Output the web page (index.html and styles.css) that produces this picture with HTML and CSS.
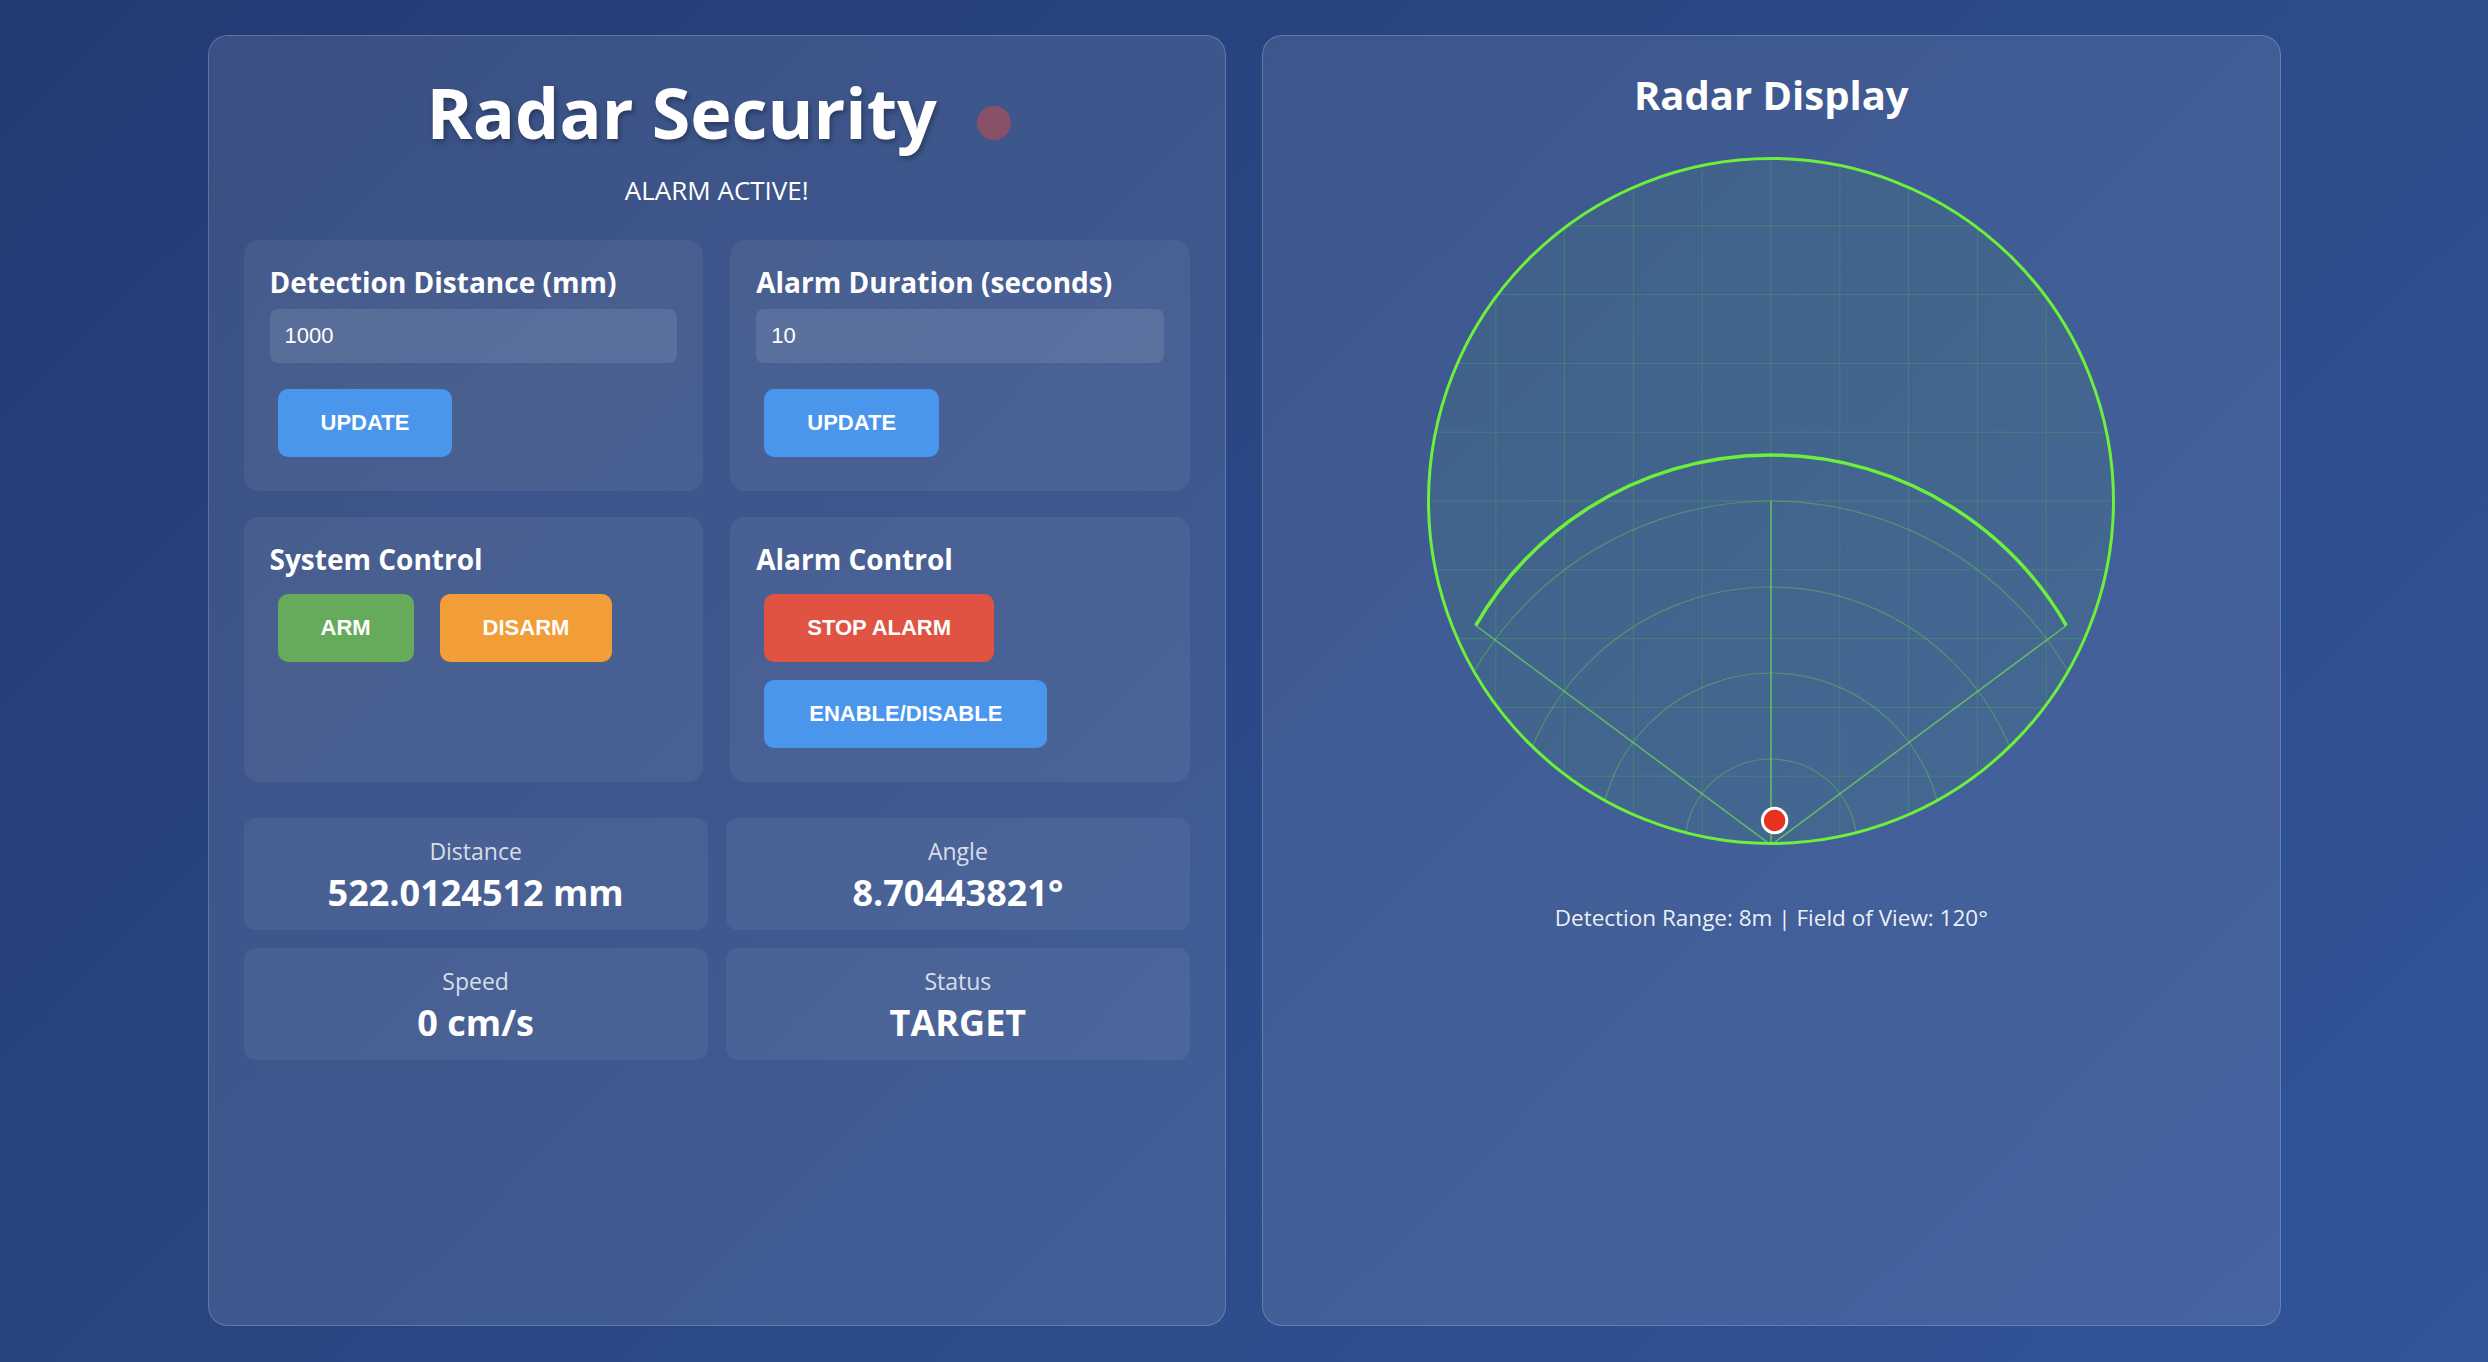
FILE: index.html
```html
<!DOCTYPE html>
<html lang="en">
<head>
<meta charset="utf-8">
<title>Radar Security</title>
<link rel="stylesheet" href="styles.css">
</head>
<body>
<div class="layout">
  <section class="panel control-panel">
    <h1 class="title"><span class="title-text">Radar Security</span><span class="alarm-dot"></span></h1>
    <div class="status-line">ALARM ACTIVE!</div>

    <div class="controls">
      <div class="card">
        <h3 class="card-title">Detection Distance (mm)</h3>
        <input class="field" type="text" value="1000">
        <div class="btn-row"><button class="btn btn-blue">UPDATE</button></div>
      </div>
      <div class="card">
        <h3 class="card-title">Alarm Duration (seconds)</h3>
        <input class="field" type="text" value="10">
        <div class="btn-row"><button class="btn btn-blue">UPDATE</button></div>
      </div>
      <div class="card">
        <h3 class="card-title">System Control</h3>
        <div class="btn-row">
          <button class="btn btn-green">ARM</button>
          <button class="btn btn-orange">DISARM</button>
        </div>
      </div>
      <div class="card">
        <h3 class="card-title">Alarm Control</h3>
        <div class="btn-row">
          <button class="btn btn-red">STOP ALARM</button>
          <button class="btn btn-blue btn-wide">ENABLE/DISABLE</button>
        </div>
      </div>
    </div>

    <div class="stats">
      <div class="stat">
        <div class="stat-label">Distance</div>
        <div class="stat-value">522.0124512 mm</div>
      </div>
      <div class="stat">
        <div class="stat-label">Angle</div>
        <div class="stat-value">8.70443821°</div>
      </div>
      <div class="stat">
        <div class="stat-label">Speed</div>
        <div class="stat-value">0 cm/s</div>
      </div>
      <div class="stat">
        <div class="stat-label">Status</div>
        <div class="stat-value">TARGET</div>
      </div>
    </div>
  </section>

  <section class="panel radar-panel">
    <h2 class="radar-title">Radar Display</h2>
    <svg class="radar" width="688" height="688" viewBox="0 0 688 688">
      <defs>
        <clipPath id="scope">
          <circle cx="344" cy="344" r="342.5"/>
        </clipPath>
      </defs>
      <circle cx="344" cy="344" r="342.5" fill="rgba(76,175,80,0.1)"/>
      <g clip-path="url(#scope)">
        <g stroke="rgba(90,185,90,0.3)" stroke-width="1">
          <line x1="68.8" y1="0" x2="68.8" y2="688"/>
          <line x1="137.6" y1="0" x2="137.6" y2="688"/>
          <line x1="206.4" y1="0" x2="206.4" y2="688"/>
          <line x1="275.2" y1="0" x2="275.2" y2="688"/>
          <line x1="344" y1="0" x2="344" y2="688"/>
          <line x1="412.8" y1="0" x2="412.8" y2="688"/>
          <line x1="481.6" y1="0" x2="481.6" y2="688"/>
          <line x1="550.4" y1="0" x2="550.4" y2="688"/>
          <line x1="619.2" y1="0" x2="619.2" y2="688"/>
          <line x1="0" y1="68.8" x2="688" y2="68.8"/>
          <line x1="0" y1="137.6" x2="688" y2="137.6"/>
          <line x1="0" y1="206.4" x2="688" y2="206.4"/>
          <line x1="0" y1="275.2" x2="688" y2="275.2"/>
          <line x1="0" y1="344" x2="688" y2="344"/>
          <line x1="0" y1="412.8" x2="688" y2="412.8"/>
          <line x1="0" y1="481.6" x2="688" y2="481.6"/>
          <line x1="0" y1="550.4" x2="688" y2="550.4"/>
          <line x1="0" y1="619.2" x2="688" y2="619.2"/>
        </g>
        <g fill="none" stroke="rgba(100,200,90,0.45)" stroke-width="1.2">
          <circle cx="344" cy="688" r="86"/>
          <circle cx="344" cy="688" r="172"/>
          <circle cx="344" cy="688" r="258"/>
          <circle cx="344" cy="688" r="344"/>
        </g>
        <g stroke="rgba(110,215,90,0.75)" stroke-width="1.5">
          <line x1="344" y1="688" x2="48.7" y2="468.5"/>
          <line x1="344" y1="688" x2="639.3" y2="468.5"/>
          <line x1="344" y1="688" x2="344" y2="344"/>
        </g>
        <path d="M 48.7 468.5 A 341 341 0 0 1 639.3 468.5" fill="none" stroke="#6cf03c" stroke-width="3.5"/>
      </g>
      <circle cx="344" cy="344" r="342.5" fill="none" stroke="#6cf03c" stroke-width="3"/>
      <circle cx="347.6" cy="663.5" r="12.2" fill="#e8321e" stroke="#ffffff" stroke-width="3"/>
    </svg>
    <div class="radar-caption">Detection Range: 8m | Field of View: 120°</div>
  </section>
</div>
</body>
</html>
```
FILE: styles.css
```css
* {
  box-sizing: border-box;
}

html, body {
  margin: 0;
  padding: 0;
}

body {
  min-height: 100vh;
  background: linear-gradient(135deg, #233b73 0%, #2b4a88 55%, #31549a 100%);
  font-family: "Open Sans", "DejaVu Sans", sans-serif;
  color: #ffffff;
  overflow: hidden;
}

.layout {
  width: 2073px;
  height: 1291px;
  margin: 35px auto 0;
  display: grid;
  grid-template-columns: 1fr 1fr;
  column-gap: 36px;
}

.panel {
  background: rgba(255, 255, 255, 0.1);
  border: 1px solid rgba(255, 255, 255, 0.2);
  border-radius: 20px;
  padding: 35px;
}

/* ---------- left panel ---------- */

.title {
  margin: 0;
  display: flex;
  justify-content: center;
  align-items: center;
  gap: 40px;
  padding-left: 4px;
  font-size: 70px;
  line-height: 82px;
  font-weight: 700;
  text-shadow: 2px 3px 5px rgba(0, 0, 0, 0.3);
}

.alarm-dot {
  width: 34px;
  height: 34px;
  border-radius: 50%;
  background: rgba(231, 76, 60, 0.45);
  margin-top: 21px;
}

.status-line {
  margin-top: 24px;
  text-align: center;
  font-size: 26px;
  line-height: 26px;
}

.controls {
  margin-top: 37px;
  display: grid;
  grid-template-columns: 1fr 1fr;
  column-gap: 27px;
  row-gap: 26px;
}

.card {
  background: rgba(255, 255, 255, 0.06);
  border-radius: 15px;
  padding: 26px;
}

.card-title {
  margin: 0 0 11px;
  font-size: 28px;
  line-height: 32px;
  font-weight: 700;
}

.field {
  display: block;
  width: 100%;
  height: 54px;
  margin: 0 0 18px;
  padding: 0 15px;
  border: none;
  border-radius: 8px;
  background: rgba(255, 255, 255, 0.1);
  color: #ffffff;
  font-family: "Liberation Sans", Arial, sans-serif;
  font-size: 22px;
  outline: none;
}

.btn-row {
  display: flex;
  flex-wrap: wrap;
  column-gap: 10px;
  row-gap: 2px;
}

.btn {
  margin: 8px;
  padding: 21px 43px;
  border: none;
  border-radius: 10px;
  color: #ffffff;
  font-family: "Liberation Sans", Arial, sans-serif;
  font-size: 22px;
  line-height: 26px;
  font-weight: 700;
  cursor: pointer;
}

.btn-wide {
  padding-left: 45px;
  padding-right: 45px;
}

.btn-blue {
  background: #4a96ec;
}

.btn-green {
  background: #66ab5c;
}

.btn-orange {
  background: #f29d38;
}

.btn-red {
  background: #e05342;
}

.stats {
  margin-top: 36px;
  display: grid;
  grid-template-columns: 1fr 1fr;
  gap: 18px;
}

.stat {
  background: rgba(255, 255, 255, 0.06);
  border-radius: 12px;
  padding: 18px 10px 16px;
  text-align: center;
  display: flex;
  flex-direction: column;
  gap: 6px;
}

.stat-label {
  font-size: 23px;
  line-height: 30px;
  color: rgba(255, 255, 255, 0.8);
}

.stat-value {
  font-size: 36px;
  line-height: 42px;
  font-weight: 700;
}

/* ---------- right panel ---------- */

.radar-panel {
  display: flex;
  flex-direction: column;
  align-items: center;
}

.radar-title {
  margin: 0;
  font-size: 40px;
  line-height: 48px;
  font-weight: 700;
}

.radar {
  display: block;
  margin-top: 38px;
}

.radar-caption {
  margin-top: 58px;
  font-size: 22.5px;
  line-height: 30px;
  color: rgba(255, 255, 255, 0.92);
}
```
